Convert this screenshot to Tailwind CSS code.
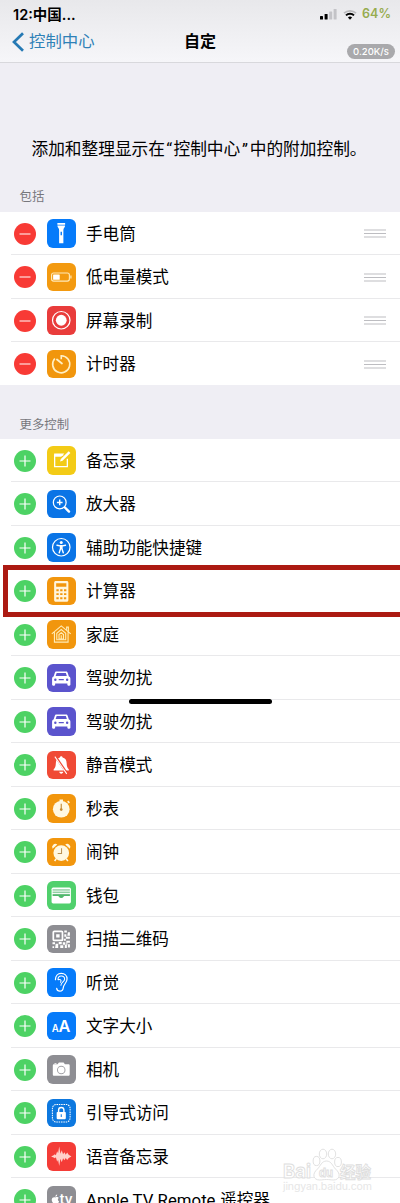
<!DOCTYPE html>
<html lang="zh-CN">
<head>
    <meta charset="UTF-8">
    <meta name="viewport" content="width=device-width, initial-scale=1.0">
    <title>自定</title>
    <script src="https://cdn.jsdelivr.net/npm/@tailwindcss/browser@4"></script>
</head>
<body class="bg-[#efeef4]">
    <div class="relative w-[400px] h-[1203px] overflow-hidden bg-[#efeef4] text-black font-['Inter','Noto_Sans_CJK_SC',sans-serif]">
        <!-- Status bar + navigation -->
        <header class="relative h-[63px] border-b border-[#d8d8dc] bg-linear-to-b from-[#e8e8eb] to-[#f6f6f9]">
            <div class="flex items-center justify-between h-7 pl-[13px] pr-[9px]">
                <span class="pt-px text-[14.5px] leading-7 font-semibold">12:中国...</span>
                <div class="flex items-center">
                    <svg class="w-[17px] h-3" viewBox="0 0 17 12">
                        <rect x="0" y="8" width="3" height="3.5" rx=".6"/>
                        <rect x="4.6" y="6" width="3" height="5.5" rx=".6"/>
                        <rect x="9.2" y="3.5" width="3" height="8" rx=".6" fill="#c3c3c7"/>
                        <rect x="13.6" y="1" width="3" height="10.5" rx=".6" fill="#c3c3c7"/>
                    </svg>
                    <svg class="w-[14px] h-[11px] ml-[6px] mr-[5px]" viewBox="0 0 14 11" fill="none" stroke-width="1.7">
                        <path d="M1 4.2a8.7 8.7 0 0 1 12 0" stroke="#b9b9bc"/>
                        <path d="M3 6.4a5.8 5.8 0 0 1 8 0" stroke="#000" stroke-width="2"/>
                        <path d="M4.9 8.4a3.1 3.1 0 0 1 4.2 0L7 10.7z" fill="#000"/>
                    </svg>
                    <span class="text-[12.5px] leading-7 font-semibold text-[#97ac50]">64%</span>
                </div>
            </div>
            <div class="flex items-center h-[27px] pl-3">
                <svg class="w-[12px] h-[20px]" viewBox="0 0 12 20" fill="none" stroke="#2579b4" stroke-width="2.7"><path d="M11 1.2 2 10l9 8.8"/></svg>
                <span class="ml-[5px] w-[155px] text-[16.4px] leading-[27px] text-[#2f81b7]">控制中心</span>
                <h1 class="text-[16px] leading-[27px] font-bold">自定</h1>
            </div>
            <span class="absolute left-[347px] top-[44px] w-12 h-[15px] rounded-full bg-[#a9a9ac] text-white text-[9.5px] leading-[15px] font-medium text-center">0.20K/s</span>
        </header>

        <p class="h-[122px] pt-[71px] pl-[31.5px] text-[16.7px] leading-7 whitespace-nowrap font-['Noto_Sans_CJK_SC',sans-serif]">添加和整理显示在<span class="inline-block w-[8.5px] text-center font-[Roboto]">“</span>控制中心<span class="inline-block w-[9.5px] text-center font-[Roboto]">”</span>中的附加控制。</p>
        <h2 class="h-[26.5px] pl-[19.5px] text-[12.4px] leading-[24px] text-[#77777c]">包括</h2>
        <ul id="included" class="bg-white h-[173.5px]"></ul>
        <h2 class="h-[54px] pt-[27.5px] pl-[19.5px] text-[12.4px] leading-[24px] text-[#77777c]">更多控制</h2>
        <ul id="more" class="-mt-[0.5px] bg-white"></ul>

        <!-- Overlays: highlight frame, home indicator, watermark -->
        <div class="absolute left-[3px] top-[564.5px] w-[410px] h-[52.5px] border-[5.5px] border-[#ac1a12]"></div>
        <div class="absolute left-[128.5px] top-[698.5px] w-[143px] h-[5px] rounded-full bg-black"></div>
        <div class="absolute left-[282px] top-[1147px] w-[100px] h-12">
            <svg class="w-full h-full" viewBox="0 0 100 48" fill="#fff" stroke="#dedede" stroke-width=".9">
                <ellipse cx="34.5" cy="14" rx="3.4" ry="4.6"/>
                <ellipse cx="41" cy="7" rx="3.7" ry="4.8"/>
                <ellipse cx="50" cy="7" rx="3.7" ry="4.8"/>
                <ellipse cx="56" cy="15" rx="3.4" ry="4.6"/>
                <path d="M44.5 14c5 0 6 5 9 8 6 5 4 11-2 11-3 0-4-.5-7-.5s-4 .5-7 .5c-6 0-8-6-2-11 3-3 4-8 9-8z"/>
                <g font-family="Inter, Noto Sans CJK SC, sans-serif" font-weight="bold">
                    <text x="1" y="31" font-size="19" textLength="28" lengthAdjust="spacingAndGlyphs">Bai</text>
                    <text x="37" y="30" font-size="12" textLength="14" lengthAdjust="spacingAndGlyphs">du</text>
                    <text x="58" y="31" font-size="15.5" textLength="31">经验</text>
                </g>
                <text x="1" y="42.5" font-size="10.5" fill="#e6e6e6" stroke="none" textLength="89" font-family="Inter, sans-serif">jingyan.baidu.com</text>
            </svg>
        </div>
    </div>

    <script>
        const car = '<path fill="#fff" fill-rule="evenodd" d="M9.3 7.3h9.4c.9 0 1.3.5 1.6 1.3l1.2 3.6c1 .4 1.5 1.1 1.5 2.2v5.8c0 .7-.4 1.1-1.1 1.1h-.9c-.7 0-1-.4-1-1.1v-1H8v1c0 .7-.3 1.1-1 1.1h-.9c-.7 0-1.1-.4-1.1-1.1v-5.8c0-1.1.5-1.8 1.5-2.2l1.2-3.6c.3-.8.7-1.3 1.6-1.3zm.2 1.6-1 3h11l-1-3zM8.2 14.2a1.2 1.2 0 1 0 0 2.4 1.2 1.2 0 0 0 0-2.4zm11.6 0a1.2 1.2 0 1 0 0 2.4 1.2 1.2 0 0 0 0-2.4zm-8.3.6v1.1h5v-1.1z"/>';

        // Rows: label, tile colour, glyph on a 28x28 grid
        const included = [
            ['手电筒', 'bg-[#067bfa]', '<path fill="#fff" d="M10.2 4h7.6v1.6h-7.6zM10.2 6.4h7.6c0 2.2-1.7 2.5-1.7 4.5v13h-4.2v-13c0-2-1.7-2.3-1.7-4.5z"/><path d="M14 12.5v3.5" stroke="#067bfa" stroke-width="1.4"/>'],
            ['低电量模式', 'bg-[#f39a10]', '<rect x="4.5" y="9.8" width="17.5" height="8" rx="2" fill="none" stroke="#ffe9b8" stroke-width="1.1"/><rect x="6" y="11.2" width="6.5" height="5.2" rx=".5" fill="#fff"/><path d="M23.5 12.3v3" stroke="#ffe9b8" stroke-width="1.2"/>'],
            ['屏幕录制', 'bg-[#e93c3b]', '<circle cx="14" cy="14" r="8.6" fill="none" stroke="#fff" stroke-width="1.2"/><circle cx="14" cy="14" r="5.3" fill="#fff"/>'],
            ['计时器', 'bg-[#f1960d]', '<path d="M14 9.2V5.6a8.4 8.4 0 1 1-6.3 2.8" fill="none" stroke="#fff0c5" stroke-width="1.6"/><path d="m9.8 9.3 4.9 4" stroke="#fff0c5" stroke-width="1.8" stroke-linecap="round"/>']
        ];
        const more = [
            ['备忘录', 'bg-[#f3cb16]', '<path d="M20 12.5v7.8H7.5V9H16" fill="none" stroke="#fff" stroke-width="1.3"/><path d="M7 7.3h10l-3 3.3H7z" fill="#fff"/><path d="m12.8 15.3.8-2.6 7.7-7.5 1.7 1.6-7.7 7.7z" fill="#fff"/>'],
            ['放大器', 'bg-[#0a74e6]', '<circle cx="12.5" cy="12.2" r="6.3" fill="none" stroke="#fff" stroke-width="1.2"/><path d="M12.5 9.4V15M9.7 12.2h5.6" stroke="#fff" stroke-width="1.4"/><path d="m17.6 17.2 4 4" stroke="#fff" stroke-width="2.4" stroke-linecap="round"/>'],
            ['辅助功能快捷键', 'bg-[#0a74e6]', '<circle cx="14" cy="14" r="8.6" fill="none" stroke="#fff" stroke-width="1.2"/><circle cx="14" cy="9.4" r="1.5" fill="#fff"/><path d="m9.8 12 3 .6h2.4l3-.6M13.3 12.8v2.7L12 19.4m2.7-6.6v2.7l1.3 3.9" fill="none" stroke="#fff" stroke-width="1.4" stroke-linecap="round"/>'],
            ['计算器', 'bg-[#f2960d]', '<path fill="#fff5dc" fill-rule="evenodd" d="M8.8 4h10.4c1.2 0 1.8.6 1.8 1.8v16.7c0 1.2-.6 1.8-1.8 1.8H8.8c-1.2 0-1.8-.6-1.8-1.8V5.8C7 4.6 7.6 4 8.8 4zm.2 2.2v3.4h10V6.2z"/><path d="M9.2 13h9.8M9.2 16.8h9.8M9.2 20.8h6m1.4 0H19" stroke="#f2960d" stroke-width="1.9" stroke-dasharray="2.3 1.45"/>'],
            ['家庭', 'bg-[#f1960d]', '<g fill="none" stroke="#ffebb5" stroke-width="1.1"><path d="m4.7 13.7 9.3-7.9 9.3 7.9M19.3 9.7V7H21v4.2M7.3 12v9.7h13.4V12"/><path d="M9.6 19.4v-6.3L14 9.4l4.4 3.7v6.3z"/><path d="M11.8 18.8v-4.5l2.2-1.8 2.2 1.8v4.5z"/><path d="M14 15v4"/></g>'],
            ['驾驶勿扰', 'bg-[#5b54cd]', car],
            ['驾驶勿扰', 'bg-[#5b54cd]', car],
            ['静音模式', 'bg-[#f04a35]', '<path fill="#fff" d="M14 5.2c.9 0 1.3.6 1.3 1.3 2.6.6 3.9 2.5 4 5.4.1 3.5.7 5 2.2 6.2v1.1h-15v-1.1c1.5-1.2 2.1-2.7 2.2-6.2.1-2.9 1.4-4.8 4-5.4 0-.7.4-1.3 1.3-1.3zM12 20.5h4c-.2 1.1-.9 1.8-2 1.8s-1.8-.7-2-1.8z"/><path d="m8.500 5.500 11.500 17" stroke="#f04a35" stroke-width="2.2"/><path d="m7.7 5.500 11.700 17" stroke="#fff" stroke-width="1"/>'],
            ['秒表', 'bg-[#f2960d]', '<circle cx="14" cy="15" r="8.2" fill="#fff8e2"/><path d="M12.3 5.3h3.4V8h-3.4z" fill="#fff8e2"/><path d="m20.3 7 1.7 1.7" stroke="#fff8e2" stroke-width="1.5"/><path d="M14 9.5v6" stroke="#c58b35" stroke-width="1.1"/><circle cx="14" cy="15.3" r="1.3" fill="#c58b35"/>'],
            ['闹钟', 'bg-[#f2960d]', '<circle cx="14" cy="14.8" r="7.7" fill="#fff8e2"/><path d="M5.5 10.5a3.1 3.1 0 0 1 4.6-4zM22.5 10.5a3.1 3.1 0 0 0-4.6-4z" fill="#fff8e2"/><path d="m9 20.500-1.500 2m11.500-2 1.500 2" stroke="#fff8e2" stroke-width="1.6"/><path d="M14.3 10v5.2h-3.8" fill="none" stroke="#b99052" stroke-width="1"/>'],
            ['钱包', 'bg-[#50d06c]', '<rect x="4.5" y="6.5" width="19" height="15.500" rx="1.5" fill="#fff"/><path d="M5.5 8.8h17M5.5 11h17M5.5 13.2h17" stroke="#50b36c" stroke-width=".9"/><path d="M5.5 14.800h5.300c.9 0 1 2 3.200 2s2.300-2 3.200-2h5.300v-1h-17z" fill="#50b96c"/>'],
            ['扫描二维码', 'bg-[#8e8e93]', '<rect x="6.2" y="6.2" width="9" height="9" rx="1" fill="none" stroke="#fff" stroke-width="1.7"/><path fill="#fff" d="M9 9h3.4v3.4H9zM17 5.400h2.500v2H17zM20.500 7h2v3.500H20zM17 9h2v2.500h-2zM18.500 11.500h4v2h-4zM16.500 13.500h2v2h-2zM5.400 17h2.500v2H5.400zM8.500 18.500h2.500v4H8zM11.500 16.800h3v2h-3zM13 20h3v2.500h-3zM15.500 17h2.500v2.500h-2.500zM19 15.500h3.500v2H20v2h-1zM17.500 19.500h2v3h-2zM20.500 19h2v3h-2zM5.400 20.800h1.600v1.700H5.400z"/>'],
            ['听觉', 'bg-[#067bfa]', '<path d="M8.3 11.500c0-3.500 2.300-6.200 5.700-6.200s5.700 2.300 5.700 5.600c0 3.700-3.300 4.700-3.700 8.500-.2 2-1.500 3.300-3.300 3.300-1.700 0-3-1-3.200-2.700" fill="none" stroke="#fff" stroke-width="1.2" stroke-linecap="round"/><path d="M10.800 11.300c0-2 1.200-3.500 3.200-3.500s3.300 1.300 3.300 3.200c0 2.500-3.600 3-3.600 6M11 11.500c2-.9 3.600.5 2.300 2.500" fill="none" stroke="#fff" stroke-width="1" stroke-linecap="round"/>'],
            ['文字大小', 'bg-[#067bfa]', '<g fill="#fff" font-family="Inter, sans-serif" font-weight="600"><text x="4.7" y="19.5" font-size="9.5">A</text><text x="11.3" y="19.5" font-size="16">A</text></g>'],
            ['相机', 'bg-[#8e8e93]', '<path fill="#fff" d="M7 9.2h3.4l1.3-1.9h4.600l1.300 1.900H21c.8 0 1.300.5 1.300 1.300v8.700c0 .8-.5 1.300-1.300 1.300H7c-.8 0-1.300-.5-1.300-1.300v-8.700c0-.8.5-1.300 1.300-1.300zM7.300 7.800h2v.8h-2z"/><circle cx="14" cy="14.7" r="3.7" fill="none" stroke="#a3a3a7" stroke-width="1"/>'],
            ['引导式访问', 'bg-[#0d78df]', '<rect x="5.3" y="5.3" width="17.4" height="17.4" rx="4" fill="none" stroke="#fff" stroke-width="1" stroke-dasharray="1.5 .8"/><rect x="9.5" y="12.8" width="9" height="7" rx=".8" fill="#fff"/><path d="M11.4 13v-2.1a2.6 2.6 0 0 1 5.2 0V13" fill="none" stroke="#fff" stroke-width="1.4"/><path d="M14 15v2.8" stroke="#0d78df" stroke-width="1"/>'],
            ['语音备忘录', 'bg-[#f43c37]', '<path fill="#ffd0ca" d="M4 14.2 6.5 13l1.2-1 1 1L10 9l.9 2L12 4.500l1.200 7L14.500 8l1.300 4 1.300-2 1.300 2.500 1.400-2.200 1.500 2.300 2.700 1.600-2.700 1.400-1.500 2.200-1.400-2-1.300 2.200-1.300-2-1.300 4-1.300-3.500-1.200 7-1.100-6-.9 2L8.700 15l-1 1-1.200-.8z"/>'],
            ['<span class="font-[Roboto] text-[16.8px]">Apple TV Remote</span> 遥控器', 'bg-[#8e8e93]', '<path fill="#fff" d="M8.2 11.2c.8-.5 3-.6 3.3.7-1.3.8-1 2.700.4 3.300-.6 1.500-1.500 2.600-2.500 2.100-.6-.3-1-.3-1.600 0-1.600.8-3.300-2.200-3.100-4.200.2-1.700 1.800-2.600 3.500-1.900zM8.200 10.600c0-1.300.7-2.100 1.800-2.300 0 1.300-.7 2.200-1.800 2.300z"/><text x="12.5" y="17.5" font-size="13" fill="#fff" font-family="Inter, sans-serif" font-weight="600">tv</text>']
        ];

        // Render one settings row
        function row([label, color, glyph], removable, last) {
            const badge = removable ? 'bg-[#f83a35]' : 'bg-[#4dd264]';
            const sign = removable ? 'M5.5 11h11' : 'M5.5 11h11M11 5.5v11';
            const grip = removable
                ? '<svg class="ml-auto mr-[14px] w-[22px] h-[9px] mt-px" viewBox="0 0 22 9" stroke="#bdbdc1"><path d="M0 1h22M0 4.5h22M0 8h22"/></svg>'
                : '';
            return `
                <li class="relative flex items-center h-[43.5px] pl-[14px]">
                    <svg class="shrink-0 w-[22px] h-[22px] mt-px rounded-full ${badge}" viewBox="0 0 22 22"><path d="${sign}" stroke="#fff" stroke-width="1.2"/></svg>
                    <span class="shrink-0 ml-[11px] w-[28.5px] h-[28.5px] rounded-[6px] overflow-hidden ${color}">
                        <svg class="w-full h-full" viewBox="0 0 28 28">${glyph}</svg>
                    </span>
                    <span class="ml-[10.5px] mt-px text-[16.6px] leading-6 whitespace-nowrap">${label}</span>
                    ${grip}
                    ${last ? '' : '<i class="absolute left-[11px] right-0 bottom-0 h-px bg-[#e9e9eb]"></i>'}
                </li>`;
        }

        document.getElementById('included').innerHTML = included.map((r, i) => row(r, true, i === included.length - 1)).join('');
        document.getElementById('more').innerHTML = more.map(r => row(r, false, false)).join('');
    </script>
</body>
</html>
